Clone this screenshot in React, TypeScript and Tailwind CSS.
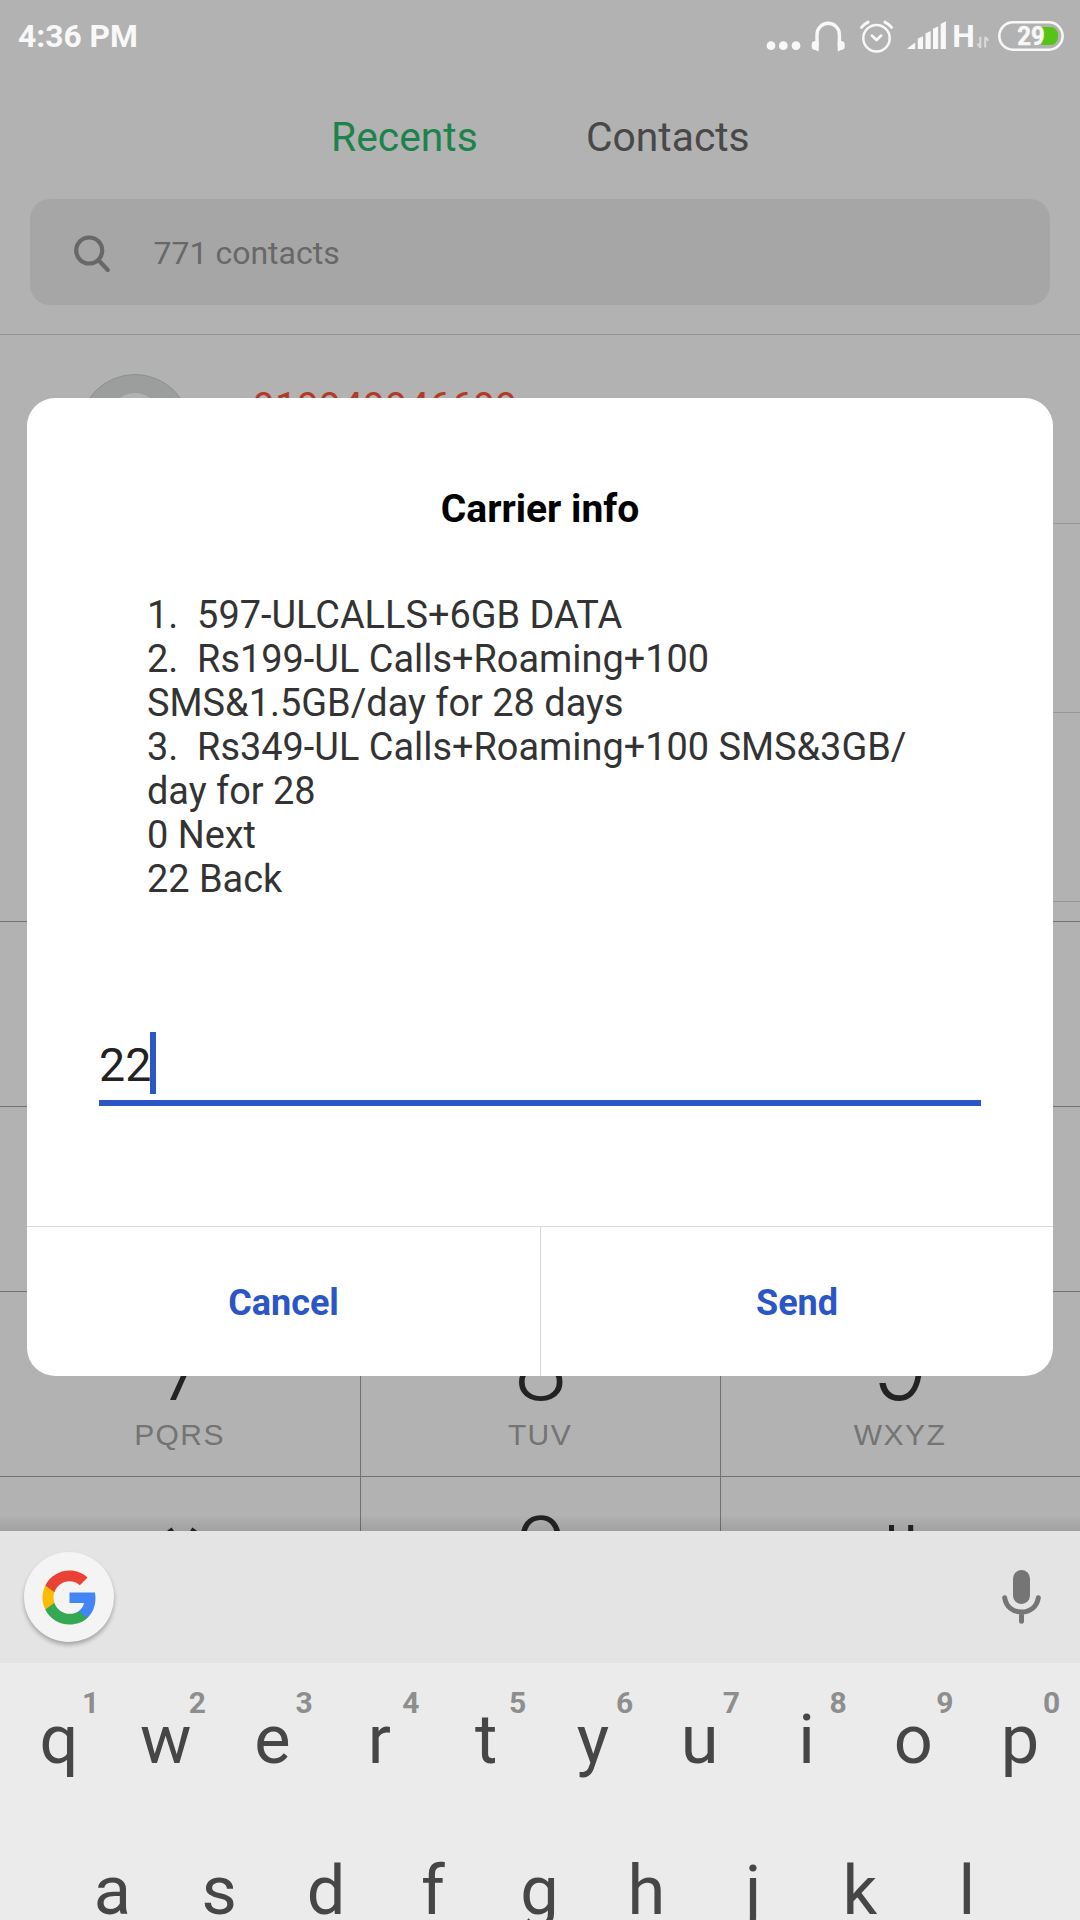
import type { ReactNode } from "react";

const numberRow = [
  ["q", "1"],
  ["w", "2"],
  ["e", "3"],
  ["r", "4"],
  ["t", "5"],
  ["y", "6"],
  ["u", "7"],
  ["i", "8"],
  ["o", "9"],
  ["p", "0"],
];
const homeRow = ["a", "s", "d", "f", "g", "h", "j", "k", "l"];

const message = [
  "1.  597-ULCALLS+6GB DATA",
  "2.  Rs199-UL Calls+Roaming+100",
  "SMS&1.5GB/day for 28 days",
  "3.  Rs349-UL Calls+Roaming+100 SMS&3GB/",
  "day for 28",
  "0 Next",
  "22 Back",
];

function StatusIcons() {
  return (
    <svg width="340" height="74" viewBox="0 0 340 74" fill="#f8f8f8">
      {/* notification dots */}
      <circle cx="31" cy="45.7" r="4.4" />
      <circle cx="43.3" cy="45.7" r="4.4" />
      <circle cx="56" cy="45.7" r="4.4" />
      {/* headphones */}
      <path d="M77 46V34.5a11.200 11.200 0 0 1 22.400 0V46" fill="none" stroke="#f8f8f8" strokeWidth="3.400" />
      <path d="M78.700 41v10.200c-1.600.2-2.400-.8-3.200-1.200-2.600-.2-3.800-1.200-3.800-3v-3c0-2 1.600-3 4-3zM97.700 41v10.200c1.600.2 2.400-.8 3.200-1.200 2.600-.2 3.800-1.200 3.800-3v-3c0-2-1.600-3-4-3z" />
      {/* alarm clock */}
      <g fill="none" stroke="#f8f8f8" strokeLinecap="round">
        <circle cx="136.500" cy="38.300" r="13.200" strokeWidth="2.500" />
        <path d="M131.800 35.600l4.700 4.500 4.700-4.500" strokeWidth="2.700" strokeLinejoin="round" />
        <path d="M121.500 27.400q2.800-3.400 6.600-5.300M151.500 27.400q-2.800-3.400-6.600-5.300" strokeWidth="3" />
      </g>
      {/* signal */}
      <path d="M167.500 49q0-.8.7-1.300l7-5.300V49zM177.800 49V38.600l5.200-2.400V49zM185.500 49V33.400l5.200-2.400V49zM193 49V28.800l5.200-2.600V49zM200.700 49V24l5.200-2.800V49z" />
      <text x="212.300" y="47" fontFamily="Roboto" fontWeight="700" fontSize="30.500" textLength="22.600" lengthAdjust="spacingAndGlyphs">
        H
      </text>
      {/* data arrows */}
      <path d="M240.300 48V36.800M237.400 43.600l2.700 3.700M245.200 36.800V47.500M248.300 40.800l-2.700-3.600" fill="none" stroke="#dadada" strokeWidth="2" />
      {/* battery */}
      <path d="M301.500 27h9a7.500 7.500 0 0 1 7.500 7.500v3a7.500 7.500 0 0 1-7.500 7.500h-9z" fill="#56c416" />
      <rect x="259.300" y="22.300" width="63.300" height="27.400" rx="13.700" fill="none" stroke="#f8f8f8" strokeWidth="2.600" />
      <text x="277.300" y="45" fontFamily="Roboto" fontWeight="700" fontSize="26" textLength="27.500" lengthAdjust="spacingAndGlyphs" stroke="#f8f8f8" strokeWidth="0.500">
        29
      </text>
    </svg>
  );
}

function PadKey({ children, letters, first }: { children: ReactNode; letters?: string; first?: boolean }) {
  return (
    <div className={`flex h-[185px] flex-col items-center border-t border-[#727272] ${first ? "" : "border-l"}`}>
      <div className="mt-[27px] h-24 text-[96px] leading-[96px] font-light text-[#232323]">{children}</div>
      {letters && (
        <div className="mt-[5px] pr-[1px] font-['Liberation_Sans'] text-[30px] leading-[30px] tracking-[1.4px] text-[#747474]">
          {letters}
        </div>
      )}
    </div>
  );
}

function StarGlyph() {
  return (
    <svg width="96" height="96" viewBox="0 0 96 96" stroke="#232323" strokeWidth="5.200">
      <path d="M37.500 25L62.500 65M62.500 25L37.500 65M27 45H73" />
    </svg>
  );
}

function HashGlyph() {
  return (
    <svg width="96" height="96" viewBox="0 0 96 96" stroke="#232323" strokeWidth="5">
      <path d="M38.500 21V75M57.700 21V75M24 38H72M24 58H72" />
    </svg>
  );
}

function GoogleLogo() {
  return (
    <svg width="59" height="59" viewBox="0 0 24 24">
      <path fill="#4285f4" d="M22.560 12.250c0-.78-.07-1.530-.2-2.250H12v4.260h5.920c-.26 1.370-1.040 2.530-2.210 3.310v2.770h3.570c2.080-1.920 3.280-4.740 3.280-8.090z" />
      <path fill="#34a853" d="M12 23c2.970 0 5.460-.98 7.280-2.660l-3.570-2.770c-.98.660-2.230 1.060-3.710 1.060-2.860 0-5.290-1.930-6.160-4.530H2.180v2.840C3.990 20.530 7.700 23 12 23z" />
      <path fill="#fbbc05" d="M5.840 14.090c-.22-.66-.35-1.360-.35-2.090s.13-1.430.35-2.090V7.070H2.180C1.430 8.550 1 10.220 1 12s.43 3.450 1.180 4.930l3.660-2.840z" />
      <path fill="#ea4335" d="M12 5.380c1.620 0 3.060.56 4.210 1.640l3.150-3.150C17.450 2.090 14.970 1 12 1 7.700 1 3.990 3.470 2.180 7.070l3.660 2.840c.87-2.600 3.300-4.530 6.160-4.530z" />
    </svg>
  );
}

function Dialer() {
  return (
    <>
      <header className="flex h-[74px] items-center justify-between pl-[18px]">
        <span className="text-[31.800px] font-bold text-[#f8f8f8]">4:36 PM</span>
        <StatusIcons />
      </header>
      <nav className="flex h-[125px] items-center pt-[3px] pl-[331px] text-[40.800px]">
        <span className="w-[255px] text-[#1c834b]">Recents</span>
        <span className="text-[#484848]">Contacts</span>
      </nav>
      <div className="mx-[30px] flex h-[106px] items-center rounded-[20px] bg-[#a6a6a6] pl-[42px] text-[#686868]">
        <svg width="42" height="42" viewBox="0 0 42 42" fill="none" stroke="#686868" strokeWidth="4.200" strokeLinecap="round">
          <circle cx="17.200" cy="19.500" r="13" />
          <path d="M26.800 29.500l9 9.500" />
        </svg>
        <span className="ml-[39.500px] pt-[2px] text-[32px]">771 contacts</span>
      </div>
      <div className="mt-[29px] h-[587px] overflow-hidden">
        <div className="flex h-[189px] border-t border-[#969696] pt-[39px] pl-[79px]">
          <svg width="112" height="112" viewBox="0 0 112 112">
            <circle cx="56" cy="56" r="55.500" fill="#9b9e9c" stroke="#8d908e" />
            <circle cx="56" cy="45" r="26" fill="#b2b2b2" />
          </svg>
          <span className="ml-[62px] pt-[10px] text-[39.200px] leading-[46px] text-[#b33a28]">919949946699</span>
        </div>
        <div className="ml-[79px] h-[189px] border-t border-[#969696]" />
        <div className="ml-[79px] h-[189px] border-t border-[#969696]" />
        <div className="ml-[79px] h-[189px] border-t border-[#969696]" />
      </div>
      <div className="grid grid-cols-3">
        <PadKey first>1</PadKey>
        <PadKey letters="ABC">2</PadKey>
        <PadKey letters="DEF">3</PadKey>
        <PadKey first letters="GHI">4</PadKey>
        <PadKey letters="JKL">5</PadKey>
        <PadKey letters="MNO">6</PadKey>
        <PadKey first letters="PQRS">
          <span className="pl-[6px]">7</span>
        </PadKey>
        <PadKey letters="TUV">8</PadKey>
        <PadKey letters="WXYZ">
          <span className="font-['Inter'] text-[92px] leading-[96px]">9</span>
        </PadKey>
        <PadKey first>
          <StarGlyph />
        </PadKey>
        <PadKey>0</PadKey>
        <PadKey>
          <HashGlyph />
        </PadKey>
      </div>
    </>
  );
}

function CarrierDialog() {
  return (
    <section className="absolute top-[398px] left-[27px] flex h-[978px] w-[1026px] flex-col overflow-hidden rounded-[28px] bg-white">
      <h1 className="mt-[89px] text-center text-[39px] leading-[44px] font-bold text-black">Carrier info</h1>
      <div className="mt-[62px] ml-[120px] text-[37.900px] leading-[44px] whitespace-pre text-[#333333]">
        {message.map((line) => (
          <p key={line}>{line}</p>
        ))}
      </div>
      <div className="mx-[72px] mt-[131px] flex h-[74px] border-b-[6px] border-[#2a56c6] pb-[6px]">
        <span className="w-[51px] pt-[2px] text-[46.500px] leading-[62px] text-[#222222]">22</span>
        <span className="h-[62px] w-[6px] bg-[#2a56c6]" />
      </div>
      <div className="mt-[120px] grid h-[150px] grid-cols-2 border-t border-[#d8d8d8] text-[36px] font-bold text-[#2a56c6]">
        <button className="pt-[2px]">Cancel</button>
        <button className="border-l border-[#d6d6d6] pt-[2px]">Send</button>
      </div>
    </section>
  );
}

function Keyboard() {
  return (
    <section className="absolute top-[1531px] left-0 h-[389px] w-full overflow-hidden bg-[#ebebeb] text-[#464646]">
      <div className="flex h-[132px] items-center justify-between bg-[#e4e4e4] pr-[38px] pl-[24px]">
        <div className="flex size-[90px] items-center justify-center rounded-full bg-[#f4f4f4] shadow-[0_3px_4px_rgba(0,0,0,0.28)]">
          <GoogleLogo />
        </div>
        <svg width="41" height="54" viewBox="0 0 41 54">
          <rect x="12" y="0" width="17" height="34" rx="8.500" fill="#757575" />
          <path d="M3.700 27.800C5.200 37 12 42 20.500 42S35.800 37 37.300 27.800M20.500 42v9.300" fill="none" stroke="#757575" strokeWidth="5" strokeLinecap="round" />
        </svg>
      </div>
      <div className="flex px-[5.500px] pt-px text-[68.500px] leading-[151px]">
        {numberRow.map(([letter, digit]) => (
          <div key={letter} className="relative h-[151px] w-[106.800px] text-center">
            {letter}
            <span className="absolute top-[24px] left-[69.500px] w-[31px] text-[30px] leading-[30px] font-bold text-[#8e8e8e]">{digit}</span>
          </div>
        ))}
      </div>
      <div className="flex px-[59px] text-[68.500px] leading-[151px]">
        {homeRow.map((letter) => (
          <div key={letter} className="h-[151px] w-[106.800px] text-center">
            {letter}
          </div>
        ))}
      </div>
    </section>
  );
}

export default function App() {
  return (
    <main className="relative h-[1920px] w-[1080px] overflow-hidden bg-[#b2b2b2] font-['Roboto',sans-serif]">
      <Dialer />
      <div className="absolute top-[1515px] left-0 h-4 w-full bg-linear-to-b from-transparent to-black/10" />
      <CarrierDialog />
      <Keyboard />
    </main>
  );
}
